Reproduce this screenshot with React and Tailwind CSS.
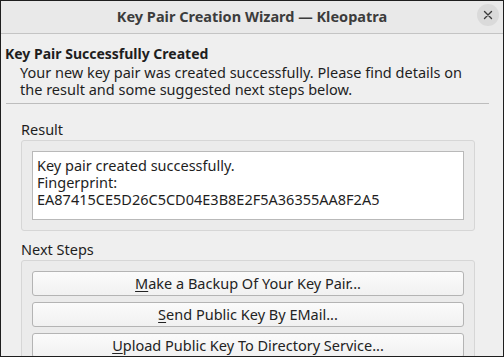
import React from 'react';

const font = { fontFamily: '"Noto Sans", "DejaVu Sans", sans-serif' };

const Mnemonic = ({ label }) => (
  <span>
    <span className="underline underline-offset-2">{label[0]}</span>
    {label.slice(1)}
  </span>
);

const StepButton = ({ label }) => (
  <button
    type="button"
    className="h-[25px] w-full rounded-[3px] border border-[#b4b4b4] bg-gradient-to-b from-[#fbfbfb] to-[#f1f1f1] text-[14.5px] leading-[17px] text-[#232323]"
  >
    <Mnemonic label={label} />
  </button>
);

const App = () => {
  return (
    <div
      className="flex h-[357px] w-[504px] flex-col overflow-hidden border border-[#1e1e1e] bg-[#efefef] text-[#1e1e1e]"
      style={font}
    >
      {/* title bar */}
      <div className="relative flex h-[33px] shrink-0 items-center justify-center border-b border-[#c4c4c4] bg-[#e9e9e9]">
        <span className="text-[14.5px] font-bold text-[#3c3c3c]">Key Pair Creation Wizard — Kleopatra</span>
        <div className="absolute right-[4px] top-[3px] flex h-[22px] w-[22px] items-center justify-center rounded-full bg-[#dadada]">
          <svg width="10" height="10" viewBox="0 0 10 10">
            <path d="M1.5 1.5 L8.5 8.5 M8.5 1.5 L1.5 8.5" stroke="#3a3a3a" strokeWidth="1.4" strokeLinecap="round" />
          </svg>
        </div>
      </div>

      {/* page */}
      <div className="flex flex-col px-[4px] pt-[11px]">
        <div className="text-[14px] font-bold leading-[17px]">Key Pair Successfully Created</div>
        <div className="mt-[2px] pl-[15px] text-[14.5px] leading-[17px]">
          Your new key pair was created successfully. Please find details on
          <br />
          the result and some suggested next steps below.
        </div>
        <div className="ml-[1px] mr-[10px] mt-[5px] h-px bg-[#bdbdbd]" />

        <div className="mt-[17px] pl-[16px] text-[14.5px] leading-[17px]">Result</div>
        <div className="ml-[16px] mr-[24px] mt-[2px] rounded-[3px] border border-[#d6d6d6] bg-[#ebebeb] p-[10px]">
          <div className="h-[69px] border border-[#b9b9b9] bg-white px-[4px] pt-[5px] text-[14.5px] leading-[17px]">
            <div>Key pair created successfully.</div>
            <div>Fingerprint:</div>
            <div>EA87415CE5D26C5CD04E3B8E2F5A36355AA8F2A5</div>
          </div>
        </div>

        <div className="mt-[10px] pl-[16px] text-[14.5px] leading-[17px]">Next Steps</div>
        <div className="ml-[16px] mr-[24px] mt-[2px] flex flex-col gap-[6px] rounded-[3px] border border-[#d6d6d6] bg-[#ebebeb] p-[10px]">
          <StepButton label="Make a Backup Of Your Key Pair..." />
          <StepButton label="Send Public Key By EMail..." />
          <StepButton label="Upload Public Key To Directory Service..." />
        </div>
      </div>
    </div>
  );
};

export default App;
